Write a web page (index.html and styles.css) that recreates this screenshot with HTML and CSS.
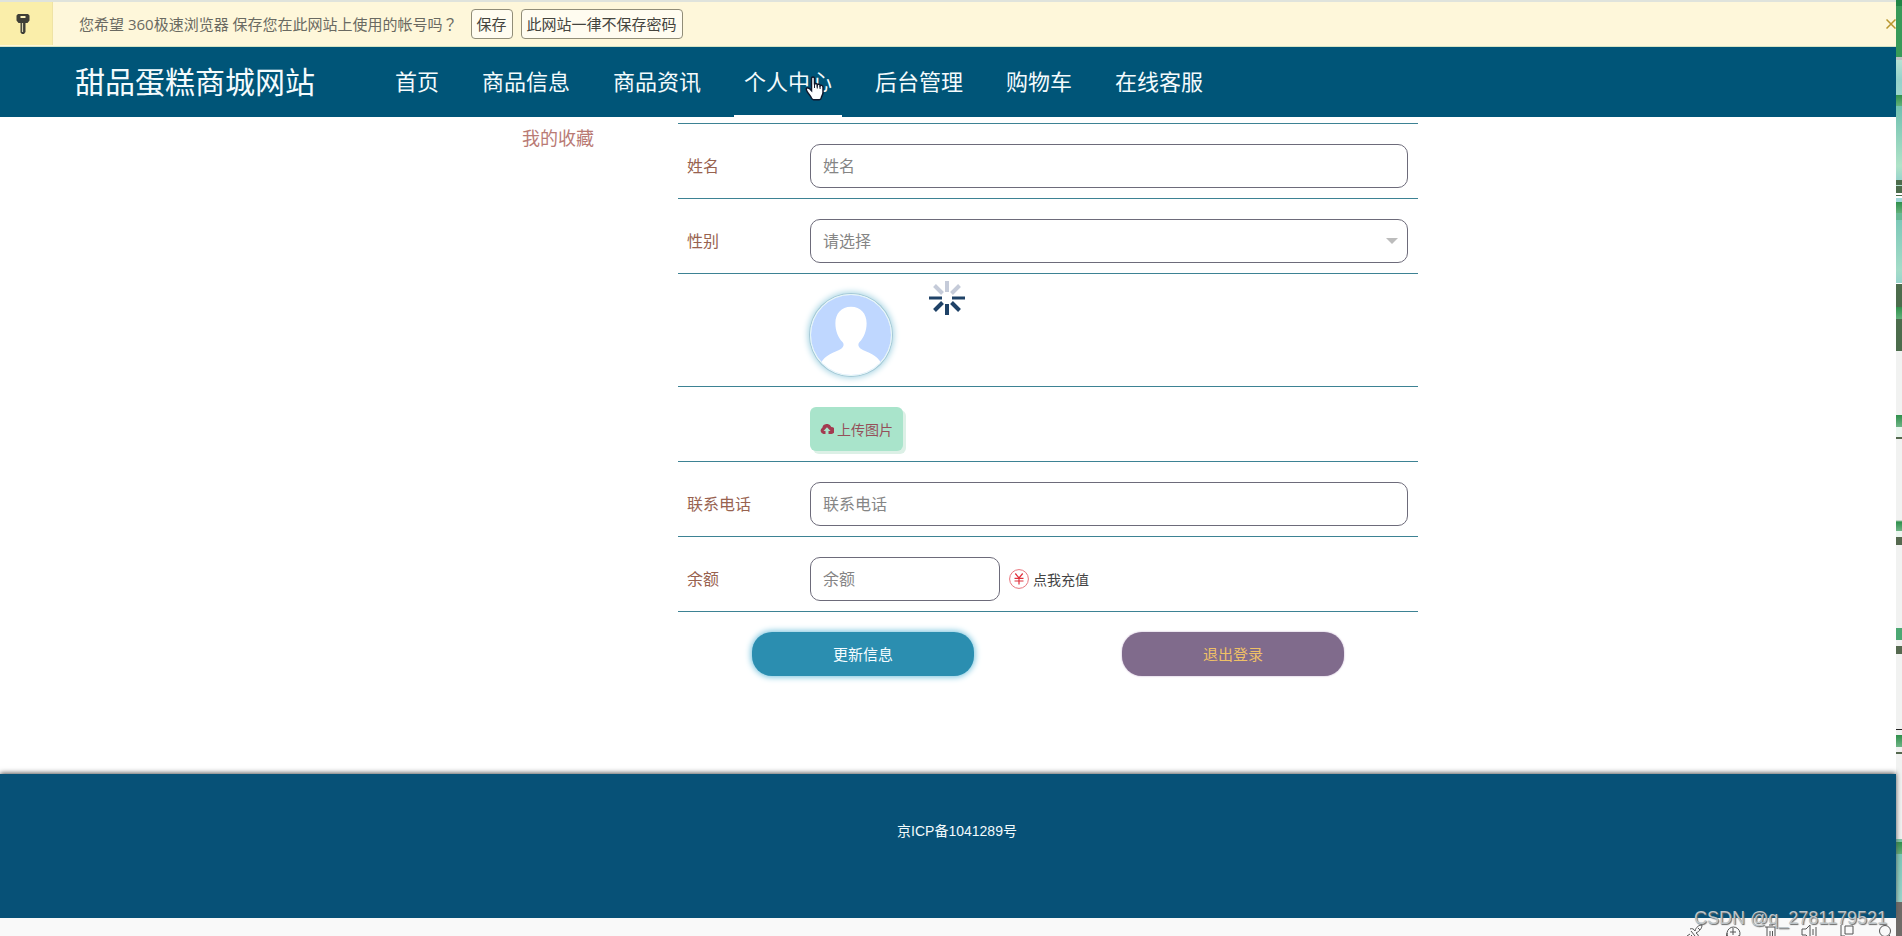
FILE: index.html
```html
<!DOCTYPE html>
<html lang="zh-CN">
<head>
<meta charset="utf-8">
<title>甜品蛋糕商城网站</title>
<link rel="stylesheet" href="styles.css">
</head>
<body>
<div class="window">
  <div class="save-bar">
    <div class="save-bar-key">
      <svg width="14" height="22" viewBox="0 0 14 22" aria-hidden="true">
        <path d="M2 1h10l1.500 1.500v5L11.500 10H9.500v9L8 21H6l-1.500-1.500V10H2.500L.5 7.500v-5z" fill="#3f3f37"/>
        <path d="M4.500 3h5v2h-5z" fill="#fdf3bd"/>
        <path d="M6.500 10v9" stroke="#d8d3ae" stroke-width="1.200"/>
      </svg>
    </div>
    <span class="save-bar-text">您希望 360极速浏览器 保存您在此网站上使用的帐号吗<span class="centered-mark" lang="zh-TW">？</span></span>
    <button class="save-bar-button" type="button">保存</button>
    <button class="save-bar-button" type="button">此网站一律不保存密码</button>
    <button class="save-bar-close" type="button" aria-label="关闭">
      <svg width="10" height="10" viewBox="0 0 10 10"><path d="M.5.5l9 9M9.500.5l-9 9" stroke="#b8962e" stroke-width="1.500"/></svg>
    </button>
  </div>

  <header class="site-header">
    <div class="brand">甜品蛋糕商城网站</div>
    <nav class="menu">
      <a class="menu-link" href="#">首页</a>
      <a class="menu-link" href="#">商品信息</a>
      <a class="menu-link" href="#">商品资讯</a>
      <a class="menu-link menu-link-active" href="#">个人中心
        <svg class="pointer" width="20" height="25" viewBox="0 0 20 25" aria-hidden="true">
          <path d="M6.500 2.500c0-2 3-2 3 0v6c.3-1.300 2.700-1.200 2.800.4.500-1 2.700-.8 2.800.8.600-.8 2.900-.5 2.900 1.500v5.300c0 2-1.500 3.500-1.800 5.500-.2 1.300-1 1.700-2 1.700H8.500c-1 0-1.500-.5-2-1.700-.7-1.800-2.800-4-4.200-6.200-.8-1.300-1.500-2.600-.8-3.400.8-.9 2.200-.6 3.200.4l1.800 1.900z" fill="#fff" stroke="#10182c" stroke-width="1.500"/>
          <path d="M9.500 8v4M12.300 9v3.500M15.100 10v3" stroke="#10182c"/>
        </svg>
      </a>
      <a class="menu-link" href="#">后台管理</a>
      <a class="menu-link" href="#">购物车</a>
      <a class="menu-link" href="#">在线客服</a>
    </nav>
  </header>

  <main class="content">
    <aside class="side"><a class="side-link" href="#">我的收藏</a></aside>
    <form class="profile">
      <div class="row">
        <label class="label" for="name">姓名</label>
        <input class="field" id="name" type="text" placeholder="姓名">
      </div>
      <div class="row">
        <label class="label" for="sex">性别</label>
        <div class="select-wrap">
          <select class="field" id="sex"><option>请选择</option><option>男</option><option>女</option></select>
        </div>
      </div>
      <div class="row">
        <svg class="avatar" viewBox="0 0 82 82" role="img" aria-label="头像">
          <rect width="82" height="82" fill="#bfd7ff"/>
          <path d="M41 12c10 0 16 7 16 17 0 8-3 15-7 19-2 2-2 5 1 7 7 4 17 6 21 15v12H10V70c4-9 14-11 21-15 3-2 3-5 1-7-4-4-7-11-7-19 0-10 6-17 16-17z" fill="#fff"/>
        </svg>
      </div>
      <div class="row">
        <button class="upload" type="button">
          <svg width="14" height="10" viewBox="0 0 14 10" aria-hidden="true">
            <path d="M3.500 10A3.400 3.400 0 0 1 2.300 3.700 4.700 4.700 0 0 1 11.300 3 3.500 3.500 0 0 1 11 10H8.500V7H10.500L7 3.200 3.500 7H5.500V10z" fill="#a33a50"/>
          </svg>上传图片</button>
      </div>
      <div class="row">
        <label class="label" for="phone">联系电话</label>
        <input class="field" id="phone" type="text" placeholder="联系电话">
      </div>
      <div class="row">
        <label class="label" for="money">余额</label>
        <div class="balance">
          <input class="field field-short" id="money" type="text" placeholder="余额">
          <a class="recharge" href="#">
            <svg width="20" height="20" viewBox="0 0 20 20" aria-hidden="true" fill="none">
              <circle cx="10" cy="10" r="9.400" stroke="#e8747c"/>
              <path d="M6.300 4.500L10 9l3.700-4.500M10 9v6.500M5.500 9.300h9M5.500 12h9" stroke="#e0303c" stroke-width="1.200"/>
            </svg>
            <span class="recharge-text">点我充值</span>
          </a>
        </div>
      </div>
      <div class="actions">
        <button class="action action-update" type="button">更新信息</button>
        <button class="action action-logout" type="button">退出登录</button>
      </div>
    </form>
    <svg class="spinner" width="36" height="36" viewBox="-18 -18 36 36" aria-hidden="true">
      <g stroke="#c5cbd9" stroke-width="4">
        <path d="M0-6V-17"/><path d="M4.500-4.500L12.500-12.500M-4.500-4.500L-12.500-12.500"/>
      </g>
      <g stroke="#1f4267" stroke-width="4">
        <path d="M5 0H18M-5 0H-18" stroke-width="3"/><path d="M0 6V17"/><path d="M4.500 4.500L12.500 12.500M-4.500 4.500L-12.500 12.500"/>
      </g>
    </svg>
  </main>

  <footer class="site-footer">京ICP备1041289号</footer>

  <div class="status-bar">
    <svg width="18" height="18" viewBox="0 0 18 18" aria-hidden="true"><path d="M2 16l4-4M5 8l4 5M4 6c2-1 4 0 5 2 1-4 4-6 7-6 0 3-2 6-6 8 2 1 3 3 2 5M1 13l3-2M6 18l1-3M12 5l2 2"/></svg>
    <svg width="18" height="18" viewBox="0 0 18 18" aria-hidden="true"><path d="M4 14a6.500 6.500 0 1 1 11 0M3 10l-1 6M9 5v7M6 9h6M9 17c4 0 6-2 6-5"/></svg>
    <svg width="18" height="18" viewBox="0 0 18 18" aria-hidden="true"><path d="M3 4h12M5 4v13h8V4M8 8v5M10.500 8v5M7 2h4"/></svg>
    <svg width="18" height="18" viewBox="0 0 18 18" aria-hidden="true"><path d="M2 6h4l4-4v14l-4-4H2zM13 6v6M16 4v10"/></svg>
    <svg width="18" height="18" viewBox="0 0 18 18" aria-hidden="true"><path d="M3 2v16M3 13h4M7 3h8v8H7z"/></svg>
    <svg width="18" height="18" viewBox="0 0 18 18" aria-hidden="true"><circle cx="9" cy="8" r="5.500"/><path d="M13 12l4 4"/></svg>
  </div>
  <div class="watermark">CSDN @q_2781179521</div>
</div>
<div class="desktop-edge"></div>
</body>
</html>
```
FILE: styles.css
```css
* { box-sizing: border-box; }

body {
  margin: 0;
  display: flex;
  min-height: 100vh;
  background: #fff;
  font-family: "Noto Sans CJK SC", sans-serif;
  font-size: 16px;
}

button, input, select { font-family: inherit; }
a { text-decoration: none; }

.window {
  position: relative;
  flex: 1;
  min-width: 0;
  display: flex;
  flex-direction: column;
}

/* password prompt */
.save-bar {
  display: flex;
  align-items: center;
  height: 47px;
  padding-bottom: 1px;
  border-top: 2px solid #dfe3dc;
  border-bottom: 1px solid #d5e3c4;
  background: #fef7da;
  color: #6a6a62;
  font-family: "Open Sans", "Noto Sans CJK SC", sans-serif;
  font-size: 15px;
}
.save-bar-key {
  display: flex;
  align-items: center;
  justify-content: center;
  align-self: stretch;
  width: 53px;
  padding-right: 6px;
  border-right: 1px solid #efe3a4;
  background: #faeeaa;
}
.save-bar-text { margin: 0 13px 0 26px; white-space: nowrap; }
.centered-mark { font-family: "Noto Sans CJK TC", sans-serif; }
.save-bar-button {
  height: 30px;
  margin-right: 8px;
  padding: 0 5px;
  border: 1px solid #918d78;
  border-radius: 4px;
  background: #fffcf0;
  color: #44443e;
  font-size: 15px;
  line-height: 20px;
  white-space: nowrap;
}
.save-bar-close {
  display: flex;
  margin-left: auto;
  padding: 0;
  border: 0;
  background: none;
}

/* header */
.site-header {
  display: flex;
  height: 70px;
  padding-left: 75px;
  background: #005578;
  color: #f4fbfd;
  line-height: 66px;
}
.brand { margin-right: 70px; font-size: 30px; white-space: nowrap; }
.menu { display: flex; gap: 23px; font-size: 22px; }
.menu-link {
  position: relative;
  padding: 0 10px;
  color: inherit;
  white-space: nowrap;
}
.menu-link-active { box-shadow: inset 0 -2px 0 #fff; }
.pointer { position: absolute; left: 71px; top: 29px; }

/* profile form */
.content {
  position: relative;
  flex: 1;
  display: flex;
  justify-content: center;
  gap: 40px;
  padding: 6px 0 96px;
}
.side { width: 160px; text-align: center; }
.side-link { color: #b97a74; font-size: 18px; line-height: 28px; }
.profile { width: 740px; border-top: 1px solid #3d8294; }
.row {
  display: grid;
  grid-template-columns: 122px 1fr;
  column-gap: 10px;
  padding: 20px 10px 10px 0;
  border-bottom: 1px solid #3d8294;
}
.label { padding-left: 9px; color: #98624f; line-height: 42px; }
.field {
  display: block;
  width: 100%;
  height: 44px;
  padding: 0 12px 2px;
  border: 1px solid #6d6b7a;
  border-radius: 10px;
  background: #fff;
  color: #858585;
  font-size: 16px;
}
.field::placeholder { color: #858585; }
select.field { appearance: none; }
.field-short { width: 190px; }
.select-wrap { position: relative; }
.select-wrap::after {
  content: "";
  position: absolute;
  right: 10px;
  top: 19px;
  border: 6px solid transparent;
  border-top-color: #bcbcbc;
  border-bottom: 0;
}
.avatar {
  grid-column: 2;
  width: 82px;
  height: 82px;
  border-radius: 50%;
  border: 1px solid #e4f6f7;
  box-shadow: 0 0 0 1px #a5c8d6, 0 0 6px 2px #a4d3e2;
}
.upload {
  grid-column: 2;
  justify-self: start;
  display: flex;
  align-items: center;
  gap: 3px;
  height: 44px;
  padding: 0 10px;
  border: 0;
  border-radius: 6px;
  background: #a9e4cb;
  box-shadow: 3px 3px 0 #dcf0e6;
  color: #95505a;
  font-size: 14px;
}
.balance { display: flex; align-items: center; gap: 9px; }
.recharge {
  display: flex;
  align-items: center;
  gap: 4px;
  color: #444;
  font-size: 14px;
}
.actions {
  display: grid;
  grid-template-columns: 1fr 1fr;
  justify-items: center;
  padding-top: 20px;
}
.action {
  width: 60%;
  height: 44px;
  padding-bottom: 2px;
  border: 0;
  border-radius: 20px;
  font-size: 15px;
}
.action-update { background: #2b8eb0; box-shadow: 0 0 6px 1px #70c0dc; color: #f4fcff; }
.action-logout { background: #806b8c; box-shadow: 0 0 2px #b79fc4; color: #efc066; }
.spinner { position: absolute; left: calc(50% - 19px); top: 163px; }

.site-footer {
  height: 144px;
  padding: 47px 0 0 18px;
  background: #075177;
  box-shadow: 0 -1px 5px #555;
  color: #f2fafc;
  font-family: "Liberation Sans", "Noto Sans CJK SC", sans-serif;
  font-size: 14px;
  line-height: 20px;
  text-align: center;
}

/* browser status bar */
.status-bar {
  display: flex;
  justify-content: flex-end;
  gap: 20px;
  height: 18px;
  padding: 5px 2px 0 0;
  overflow: hidden;
  background: #f9f9f9;
}
.status-bar svg { flex: none; fill: none; stroke: #555; }
.watermark {
  position: absolute;
  right: 9px;
  bottom: 6px;
  color: #bcc4c8;
  font-family: "Liberation Sans", sans-serif;
  font-size: 18px;
  line-height: 24px;
  text-shadow: 1px 1px 1px #666;
}

/* desktop wallpaper and tiles showing beside the window */
.desktop-edge {
  flex: none;
  width: 6px;
  background: linear-gradient(
    #208545 0 6px, #389a58 6px 57px, #bfc3c5 57px 60px,
    #b5e3d3 60px, #94d2cb 80px, #9bd6cc 95px,
    #30904c 95px, #62b07a 106px, #6fc0b0 106px, #b0e3c8 166px, #98d4cc 180px,
    #4c6c4c 180px 185px, #b5e3d3 185px 186px, #4c6c4c 186px 193px,
    #fff 193px 195px, #4c6c4c 195px 196px, #fff 196px 198px, #a0d8d8 198px 202px,
    #30904c 202px, #62b07a 213px, #68b894 213px 220px, #7cc8b8 220px, #a4dcc8 270px, #98d4cc 283px,
    #fff 283px 284px, #4c6c4c 284px 307px, #30904c 307px, #62b07a 319px,
    #4c6c4c 319px 351px, #f1f2f1 351px 415px,
    #30904c 415px, #6fb486 427px, #eaf6ef 427px 437px, #55694f 437px 439px, #f1f2f1 439px 520px,
    #30904c 522px, #6fb486 531px, #eaf6ef 531px 537px, #55694f 537px 545px, #f1f2f1 545px 628px,
    #4ca873 628px 640px, #f1f2f1 640px 646px, #55694f 646px 654px, #f1f2f1 654px 729px,
    #222 729px 730px, #f1f2f1 730px 735px, #30904c 735px, #6fb486 747px,
    #f1f2f1 747px 752px, #55694f 752px 754px, #f1f2f1 754px 839px,
    #7cc8a8 839px 842px, #30904c 842px, #62b07a 854px, #7cc8b8 854px, #9bd6cc 902px,
    #6f6b68 902px);
}
```
